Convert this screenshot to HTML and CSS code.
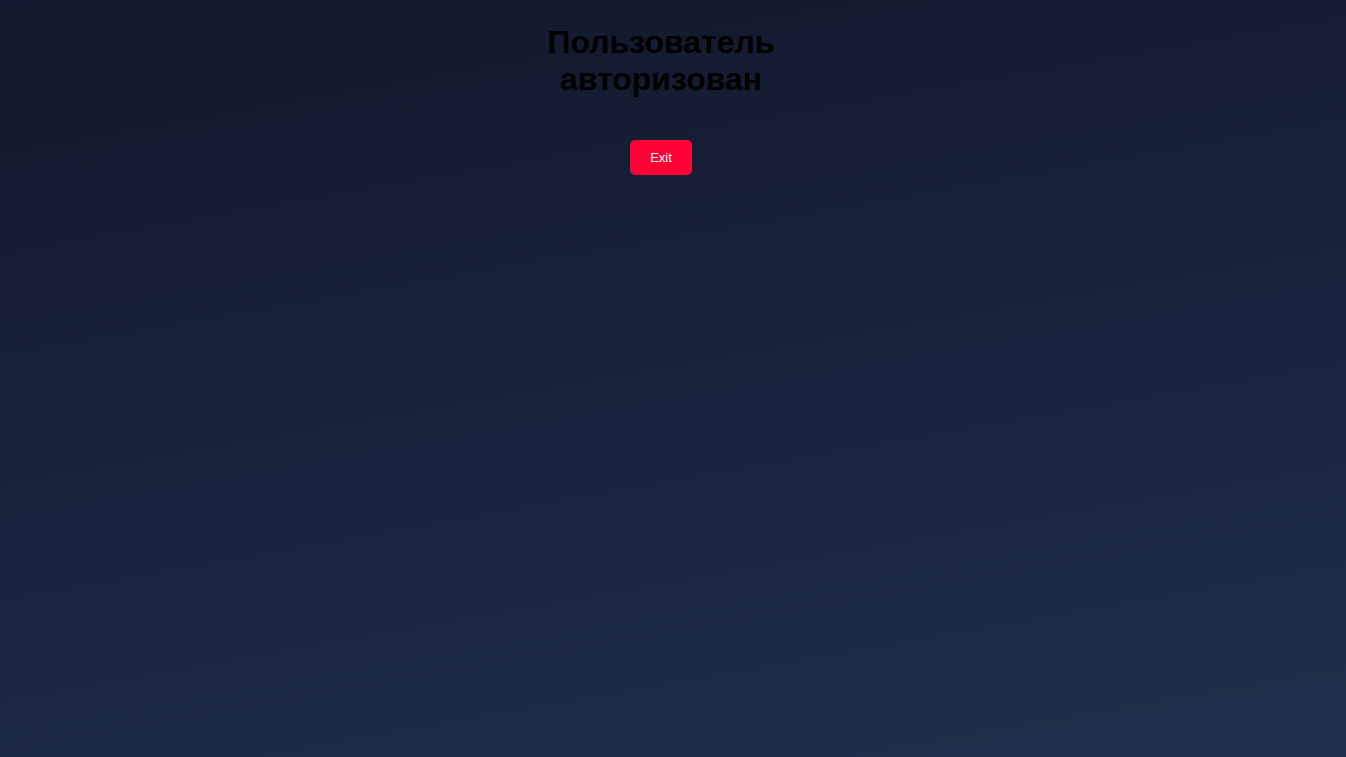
FILE: index.html
```html
<!DOCTYPE html>
<html lang="ru">
<head>
<meta charset="utf-8">
<title>Пользователь авторизован</title>
<link rel="stylesheet" href="styles.css">
</head>
<body>
<main class="page">
  <section class="panel">
    <h1 class="title">Пользователь авторизован</h1>
    <button class="exit-btn" type="button">Exit</button>
  </section>
</main>
</body>
</html>
```
FILE: styles.css
```css
html, body {
  margin: 0;
  padding: 0;
  height: 100%;
}
body {
  background: linear-gradient(170deg, #141a2f 0%, #131a2e 10%, #1e2f4d 100%);
  font-family: "Liberation Sans", Arial, sans-serif;
}
.page {
  display: flex;
  justify-content: center;
  padding: 0 24px 0 0;
  min-height: 100%;
  box-sizing: border-box;
}
.panel {
  display: flex;
  flex-direction: column;
  align-items: center;
  width: 300px;
  padding-top: 24px;
}
.title {
  margin: 0;
  font-size: 32px;
  font-weight: bold;
  line-height: 37px;
  color: #000;
  text-align: center;
}
.exit-btn {
  margin-top: 42px;
  width: 62px;
  height: 35px;
  border: none;
  border-radius: 5px;
  background: #ff0037;
  color: #fff;
  font-family: "Liberation Sans", Arial, sans-serif;
  font-size: 13px;
  padding: 0;
  cursor: pointer;
}
```
